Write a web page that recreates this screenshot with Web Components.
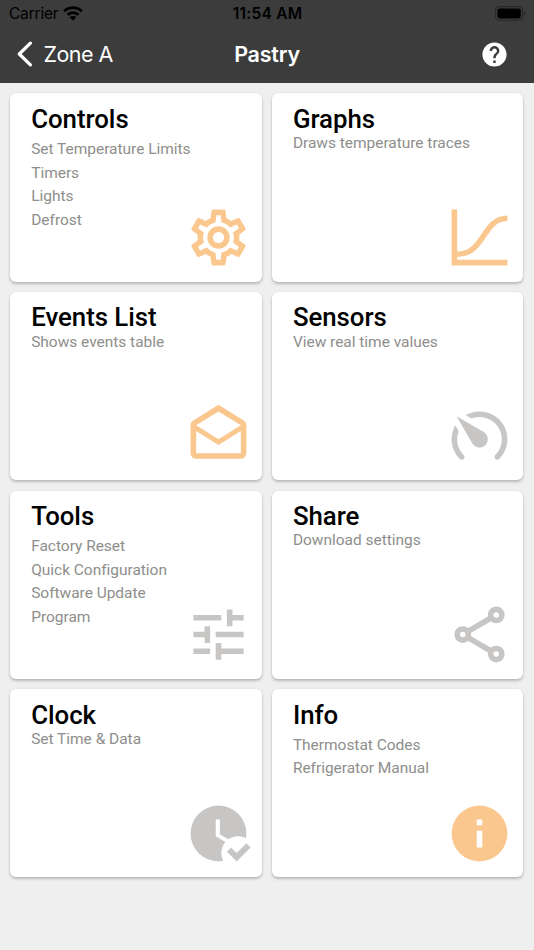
<!DOCTYPE html>
<html lang="en">
<head>
<meta charset="utf-8">
<title>Pastry</title>
<style>
  body {
    margin: 0;
    height: 950px;
    overflow: hidden;
    background: #efefef;
    font-family: Roboto, "Liberation Sans", sans-serif;
  }
</style>
</head>
<body>

<template id="status-bar">
  <style>
    :host {
      display: grid;
      grid-template-columns: 1fr auto 1fr;
      align-items: center;
      height: 27px;
      padding: 0 8px 0 9px;
      color: #000;
      font: 400 15.5px/27px Inter, sans-serif;
    }
    .left { display: flex; align-items: center; gap: 6px; letter-spacing: -.2px; }
    .time { font-weight: 600; letter-spacing: .25px; }
    .battery { justify-self: end; }
    svg { display: block; }
    .wifi { margin-left: -1px; }
  </style>
  <div class="left">
    <slot name="carrier"></slot>
    <svg class="wifi" width="20" height="15" viewBox="0 0 20 15">
      <g fill="none" stroke="#000" stroke-width="2.7">
        <path d="M1.2 5.3a12.6 12.6 0 0 1 17.6 0"/>
        <path d="M4.5 8.8a7.9 7.9 0 0 1 11 0"/>
      </g>
      <path d="M6.7 11.3a4.7 4.7 0 0 1 6.6 0L10 14.7z"/>
    </svg>
  </div>
  <div class="time"><slot name="time"></slot></div>
  <svg class="battery" width="31" height="15" viewBox="0 0 31 15">
    <rect x=".6" y=".6" width="27" height="13.6" rx="4" fill="none" stroke="#262626" stroke-width="1.1"/>
    <rect x="2.4" y="2.4" width="23.4" height="10" rx="2.4"/>
    <path d="M29.3 5.2v4.4c1.7-.7 1.7-3.7 0-4.4z" fill="#262626"/>
  </svg>
</template>

<template id="nav-bar">
  <style>
    :host {
      display: block;
      height: 83px;
      background: #3c3c3c;
      color: #fff;
    }
    .bar {
      display: grid;
      grid-template-columns: 1fr auto 1fr;
      align-items: center;
      height: 54px;
      padding: 0 25.5px 0 16.5px;
      font: 400 21.5px/54px Inter, sans-serif;
    }
    .back { display: flex; align-items: center; gap: 11px; letter-spacing: -.55px; }
    .title { font-weight: 600; letter-spacing: -.2px; transform: translateX(4.5px); }
    .help { justify-self: end; }
    svg { display: block; }
  </style>
  <slot name="status"></slot>
  <div class="bar">
    <div class="back">
      <svg width="16" height="26" viewBox="0 0 16 26">
        <path d="M13.4 2.2 2.3 13l11.1 10.8" fill="none" stroke="#fff" stroke-width="3.2" stroke-linecap="round" stroke-linejoin="round"/>
      </svg>
      <slot name="back"></slot>
    </div>
    <div class="title"><slot name="title"></slot></div>
    <svg class="help" width="29" height="29" viewBox="0 0 24 24" fill="#fff">
      <path d="M12 2C6.48 2 2 6.48 2 12s4.48 10 10 10 10-4.48 10-10S17.52 2 12 2zm1 17h-2v-2h2v2zm2.07-7.75l-.9.92C13.45 12.9 13 13.5 13 15h-2v-.5c0-1.1.45-2.1 1.17-2.83l1.24-1.26c.37-.36.59-.86.59-1.41 0-1.1-.9-2-2-2s-2 .9-2 2H8c0-2.21 1.79-4 4-4s4 1.79 4 4c0 .88-.36 1.68-.93 2.25z"/>
    </svg>
  </div>
</template>

<template id="card-grid">
  <style>
    :host {
      display: grid;
      grid-template-columns: 1fr 1fr;
      grid-auto-rows: 188.2px;
      gap: 10.4px;
      padding: 10.4px 10.6px 10.4px 10.4px;
    }
  </style>
  <slot></slot>
</template>

<template id="menu-card">
  <style>
    :host {
      display: flex;
      flex-direction: column;
      justify-content: space-between;
      box-sizing: border-box;
      padding: 10.5px 10.2px 10.5px 20.8px;
      border-radius: 6px;
      background: #fff;
      box-shadow: 0 2px 3px rgba(0, 0, 0, .22), 0 0 2px rgba(0, 0, 0, .08);
    }
    .text { height: 0; }
    h2 {
      margin: 0;
      color: #000;
      font-size: 25.8px;
      font-weight: 500;
      line-height: 30px;
      letter-spacing: -.03px;
    }
    .lines {
      color: #8e8e8b;
      font-size: 15.5px;
      line-height: 23.6px;
      letter-spacing: -.03px;
      margin-top: -1.8px;
    }
    :host([list]) .lines { margin-top: 4.2px; }
    card-icon { align-self: flex-end; }
  </style>
  <div class="text">
    <h2></h2>
    <div class="lines"><slot></slot></div>
  </div>
  <card-icon></card-icon>
</template>

<nav-bar>
  <status-bar slot="status">
    <span slot="carrier">Carrier</span>
    <span slot="time">11:54 AM</span>
  </status-bar>
  <span slot="back">Zone A</span>
  <span slot="title">Pastry</span>
</nav-bar>

<card-grid>
  <menu-card heading="Controls" icon="cog" active list>
    <div>Set Temperature Limits</div>
    <div>Timers</div>
    <div>Lights</div>
    <div>Defrost</div>
  </menu-card>
  <menu-card heading="Graphs" icon="graph" active>
    <div>Draws temperature traces</div>
  </menu-card>
  <menu-card heading="Events List" icon="mail" active>
    <div>Shows events table</div>
  </menu-card>
  <menu-card heading="Sensors" icon="gauge">
    <div>View real time values</div>
  </menu-card>
  <menu-card heading="Tools" icon="tune" list>
    <div>Factory Reset</div>
    <div>Quick Configuration</div>
    <div>Software Update</div>
    <div>Program</div>
  </menu-card>
  <menu-card heading="Share" icon="share">
    <div>Download settings</div>
  </menu-card>
  <menu-card heading="Clock" icon="clock">
    <div>Set Time &amp; Data</div>
  </menu-card>
  <menu-card heading="Info" icon="info" active list>
    <div>Thermostat Codes</div>
    <div>Refrigerator Manual</div>
  </menu-card>
</card-grid>

<script>
  // all icons are drawn on a 24x24 grid
  const ICONS = {
    cog: '<path d="M12 8a4 4 0 0 1 4 4 4 4 0 0 1-4 4 4 4 0 0 1-4-4 4 4 0 0 1 4-4m0 2a2 2 0 0 0-2 2 2 2 0 0 0 2 2 2 2 0 0 0 2-2 2 2 0 0 0-2-2m-2 12c-.25 0-.46-.18-.5-.42l-.37-2.65c-.63-.25-1.17-.59-1.69-.99l-2.49 1.01c-.22.08-.49 0-.61-.22l-2-3.46c-.13-.22-.07-.49.12-.64l2.11-1.66L4.5 12l.07-1-2.11-1.63c-.19-.15-.25-.42-.12-.64l2-3.46c.12-.22.39-.31.61-.22l2.49 1c.52-.39 1.06-.73 1.69-.98l.37-2.65c.04-.24.25-.42.5-.42h4c.25 0 .46.18.5.42l.37 2.65c.63.25 1.17.59 1.69.98l2.49-1c.22-.09.49 0 .61.22l2 3.46c.13.22.07.49-.12.64L19.43 11l.07 1-.07 1 2.11 1.63c.19.15.25.42.12.64l-2 3.46c-.12.22-.39.31-.61.22l-2.49-1c-.52.39-1.06.73-1.69.98l-.37 2.65c-.04.24-.25.42-.5.42h-4m1.25-18l-.37 2.61c-1.2.25-2.26.89-3.03 1.78L5.44 7.35l-.75 1.3L6.8 10.2a5.55 5.55 0 0 0 0 3.6l-2.12 1.56.75 1.3 2.43-1.04c.77.88 1.82 1.52 3.01 1.76l.37 2.62h1.52l.37-2.61c1.19-.25 2.24-.89 3.01-1.77l2.43 1.04.75-1.3-2.12-1.55c.4-1.17.4-2.44 0-3.61l2.11-1.55-.75-1.3-2.41 1.04a5.42 5.42 0 0 0-3.03-1.77L12.75 4h-1.5z"/>',
    graph: '<path d="M2 2h2v18h18v2H2z"/><path d="M4 18C14 18 13 5.1 22 5.1" fill="none" stroke="currentColor" stroke-width="2"/>',
    mail: '<path d="M21.03 6.29L12 .64 2.97 6.29C2.39 6.64 2 7.27 2 8v10a2 2 0 0 0 2 2h16a2 2 0 0 0 2-2V8c0-.73-.39-1.36-.97-1.71M20 18H4v-8l8 5 8-5v8m-8-5L4 8l8-5 8 5-8 5z"/>',
    gauge: '<path transform="matrix(-1 0 0 1 24 0)" d="M12 16a3 3 0 0 1-3-3c0-1.12.61-2.1 1.5-2.61l9.71-5.62-5.53 9.58c-.5.98-1.51 1.65-2.68 1.65m0-13c1.81 0 3.5.5 4.97 1.32l-2.1 1.21C14 5.19 13 5 12 5a8 8 0 0 0-8 8c0 2.21.89 4.21 2.34 5.65h.01c.39.39.39 1.02 0 1.41s-1.03.39-1.42.01C3.12 18.26 2 15.76 2 13A10 10 0 0 1 12 3m10 10c0 2.76-1.12 5.26-2.93 7.07-.39.38-1.02.38-1.41-.01s-.39-1.02 0-1.41C19.11 17.2 20 15.21 20 13c0-1-.19-2-.54-2.9L20.67 8C21.5 9.5 22 11.18 22 13z"/>',
    tune: '<path d="M3 17v2h6v-2H3zM3 5v2h10V5H3zm10 16v-2h8v-2h-8v-2h-2v6h2zM7 9v2H3v2h4v2h2V9H7zm14 4v-2H11v2h10zm-6-4h2V7h4V5h-4V3h-2v6z"/>',
    share: '<g fill="none" stroke="currentColor" stroke-width="2"><circle cx="18" cy="5" r="2"/><circle cx="6" cy="12" r="2"/><circle cx="18" cy="19" r="2"/><path d="M7.9 10.9l8.2-4.8M7.9 13.1l8.2 4.8"/></g>',
    clock: '<circle cx="12" cy="12" r="10"/><path fill="#fff" d="M12.5 7H11v6l5.25 3.15.75-1.23-4.5-2.67z"/><circle cx="19" cy="19" r="6" fill="#fff"/><path d="M23.5 17l-5 5-3.5-3.5 1.5-1.5 2 2 3.5-3.5z"/>',
    info: '<circle cx="12" cy="12" r="10"/><path fill="#fff" d="M11 7h2v2h-2zM11 11h2v6h-2z"/>'
  };

  class BaseElement extends HTMLElement {
    constructor() {
      super();
      const template = document.getElementById(this.localName);
      this.attachShadow({mode: 'open'}).appendChild(template.content.cloneNode(true));
    }
  }

  class CardIcon extends HTMLElement {
    static get observedAttributes() { return ['name']; }
    constructor() {
      super();
      this.attachShadow({mode: 'open'});
    }
    attributeChangedCallback() {
      this.shadowRoot.innerHTML = `
        <style>
          :host { display: block; width: 67px; height: 67px; margin-top: auto; color: #c8c6c4; }
          :host([active]) { color: #fac78e; }
          svg { display: block; overflow: visible; }
        </style>
        <svg width="67" height="67" viewBox="0 0 24 24" fill="currentColor">${ICONS[this.getAttribute('name')]}</svg>`;
    }
  }

  class MenuCard extends BaseElement {
    connectedCallback() {
      this.shadowRoot.querySelector('h2').textContent = this.getAttribute('heading');
      const icon = this.shadowRoot.querySelector('card-icon');
      icon.setAttribute('name', this.getAttribute('icon'));
      icon.toggleAttribute('active', this.hasAttribute('active'));
    }
  }

  customElements.define('card-icon', CardIcon);
  customElements.define('status-bar', class extends BaseElement {});
  customElements.define('nav-bar', class extends BaseElement {});
  customElements.define('card-grid', class extends BaseElement {});
  customElements.define('menu-card', MenuCard);
</script>
</body>
</html>
